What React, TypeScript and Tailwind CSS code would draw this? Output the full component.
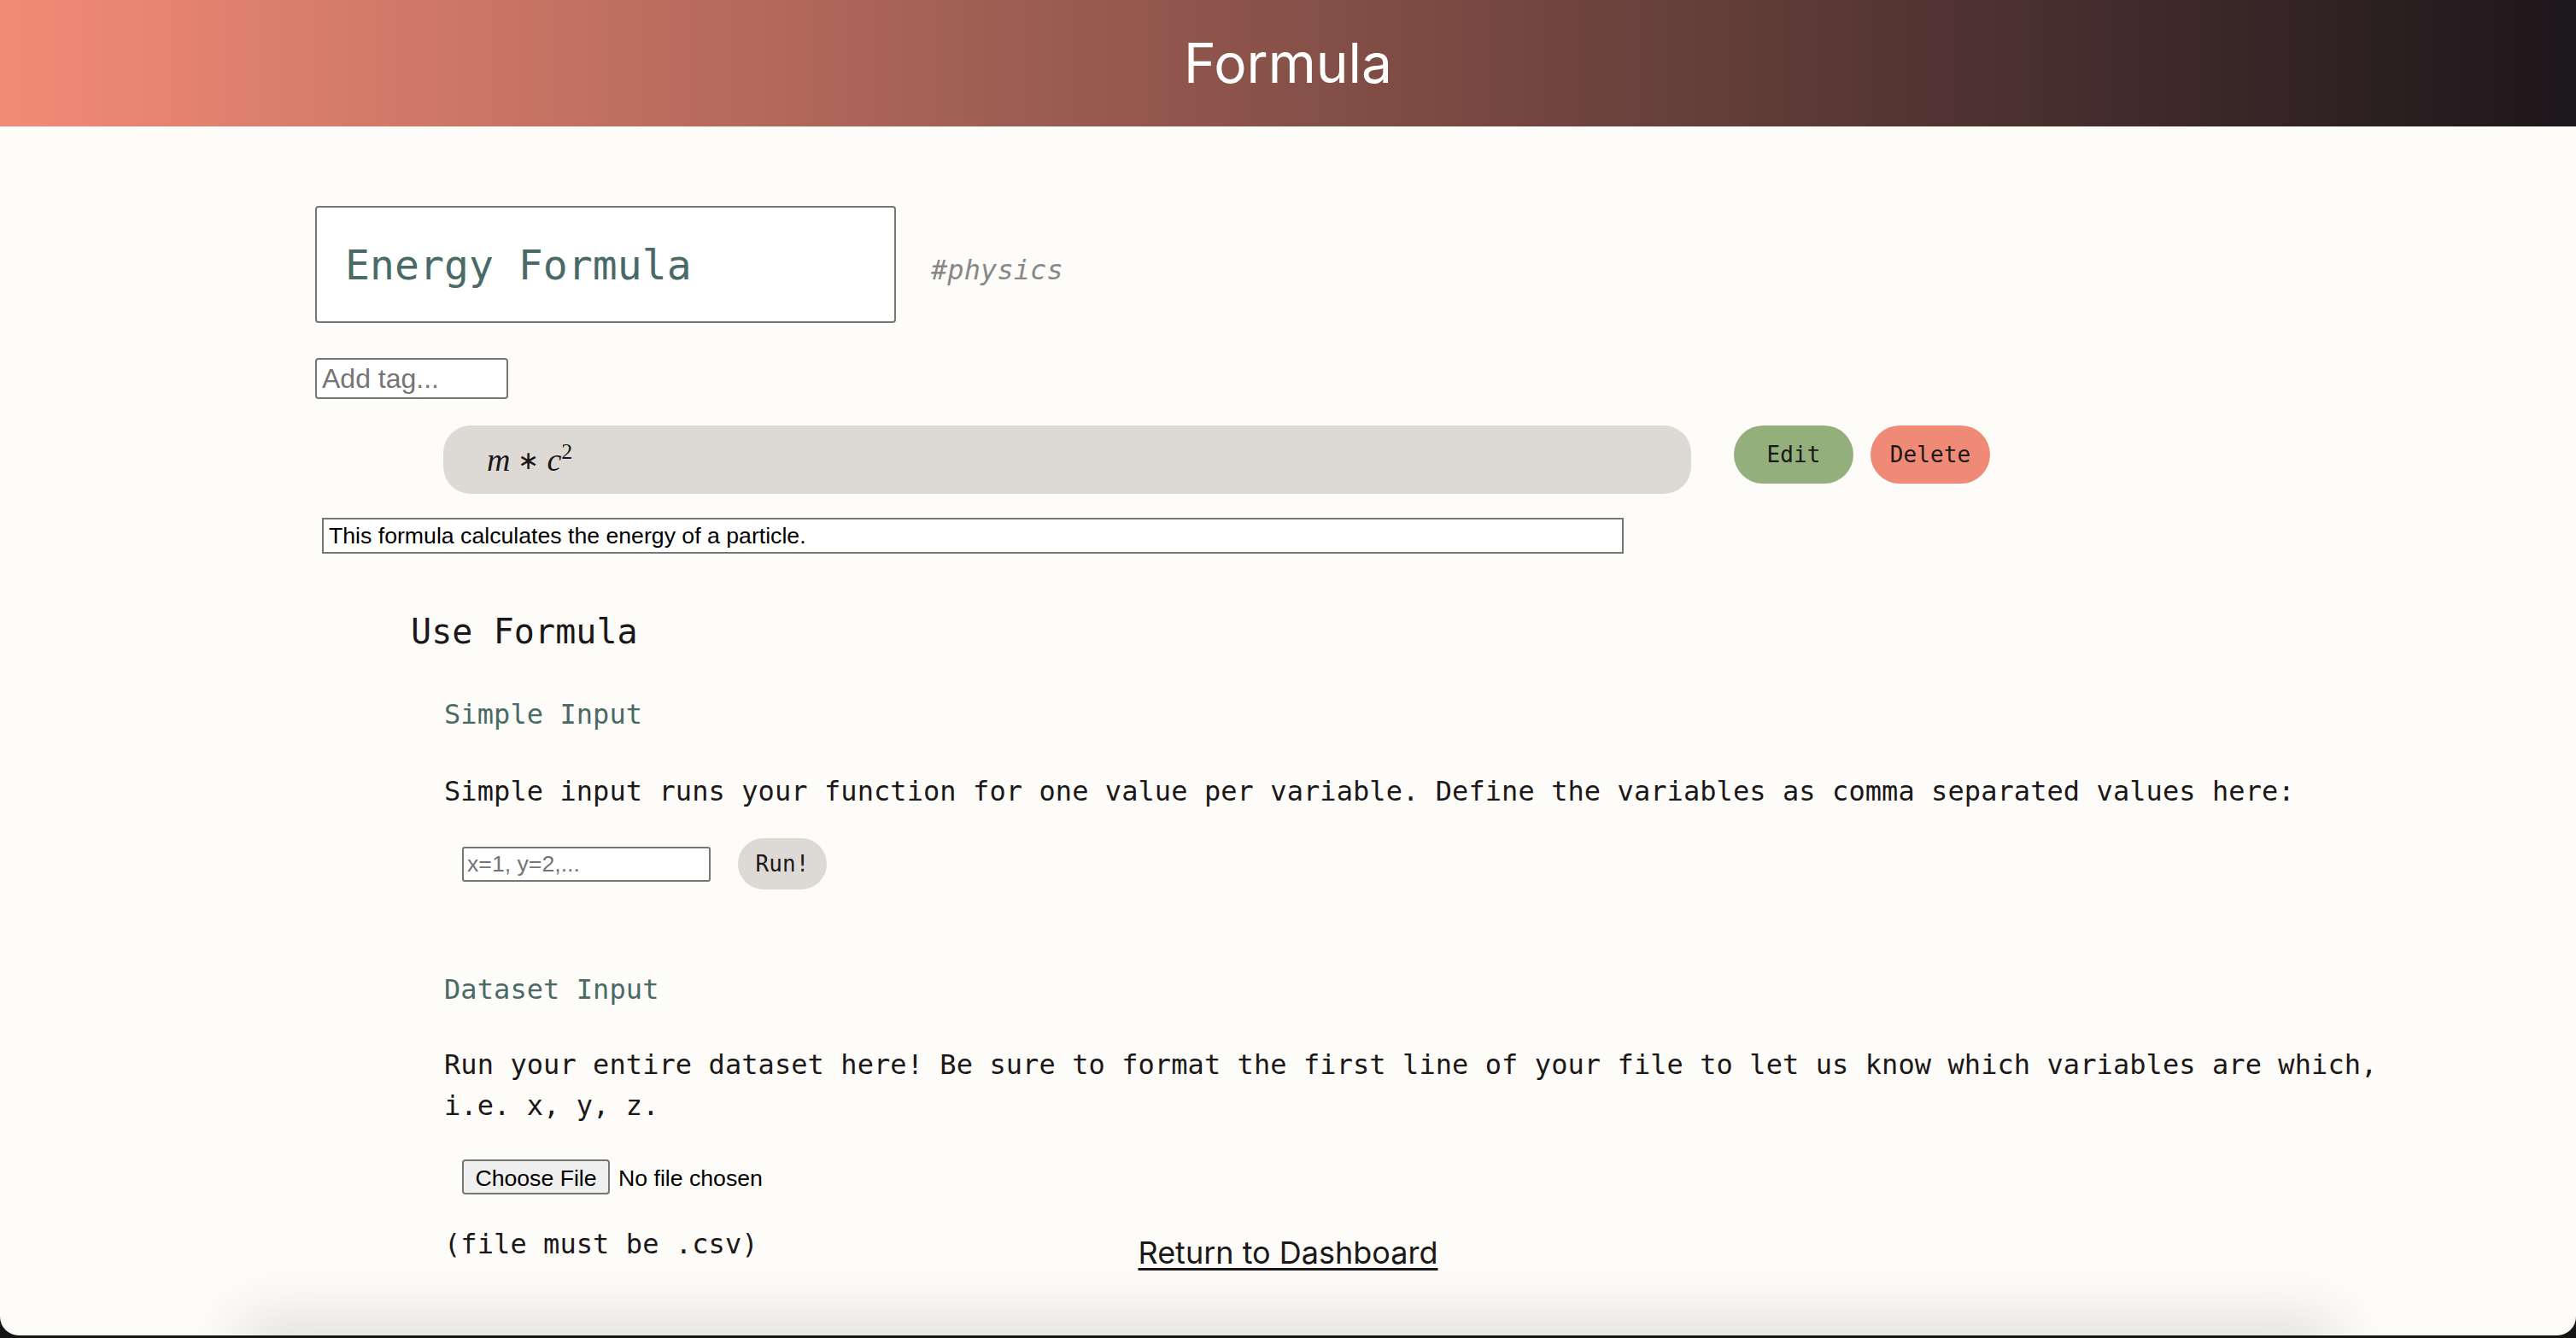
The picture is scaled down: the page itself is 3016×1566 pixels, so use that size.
import React from 'react';

const mono = "font-['DejaVu_Sans_Mono',monospace] tracking-[0.005em]";

export default function App() {
  return (
    <div className="h-[1566px] overflow-hidden bg-[#151515]">
      <div
        className={`flex h-[1563px] flex-col overflow-hidden rounded-b-[22px] bg-[#fdfcf8] text-[#1c1719] ${mono}`}
      >
        <header className="flex h-[148px] shrink-0 items-center justify-center bg-linear-to-r/srgb from-[#f28b76] to-[#1c171b]">
          <h1 className="font-['Inter',sans-serif] text-[64px] leading-none font-normal tracking-normal text-white">
            Formula
          </h1>
        </header>

        <div className="pl-[369px]">
          <div className="mt-[93px] flex items-baseline">
            <div className="flex h-[137px] w-[680px] items-center rounded-[4px] border-2 border-[#767676] bg-white pl-[33px] text-[48px] leading-none text-[#4a6a67]">
              Energy Formula
            </div>
            <span className="ml-[41px] text-[32px] text-[#888] italic">
              #physics
            </span>
          </div>

          <input
            className="mt-[41px] block h-[48px] w-[226px] rounded-[4px] border-2 border-[#767676] bg-white px-[6px] font-['Liberation_Sans',Arial,sans-serif] text-[32px] tracking-normal text-black placeholder:text-[#757575]"
            placeholder="Add tag..."
          />

          <div className="mt-[31px] flex items-start">
            <div className="ml-[150px] flex h-[80px] w-[1461px] items-center rounded-[32px] bg-[#dddad6] pl-[51px] font-['Liberation_Serif',serif] text-[38px] tracking-normal">
              <span className="italic">m</span>
              <span className="mx-[9px] text-[30px]">∗</span>
              <span className="italic">c</span>
              <sup className="relative -top-[9px] text-[26px] not-italic">2</sup>
            </div>
            <button className="ml-[50px] h-[68px] w-[140px] rounded-full bg-[#93af7b] text-[26px] text-[#1c1719]">
              Edit
            </button>
            <button className="ml-[20px] h-[68px] w-[140px] rounded-full bg-[#ef8a76] text-[26px] text-[#1c1719]">
              Delete
            </button>
          </div>

          <input
            className="mt-[28px] ml-[8px] block h-[42px] w-[1524px] border-2 border-[#767676] bg-white px-[6px] font-['Liberation_Sans',Arial,sans-serif] text-[26.67px] tracking-normal text-black"
            defaultValue="This formula calculates the energy of a particle."
          />
        </div>

        <section className="pl-[481px]">
          <h2 className="mt-[67px] text-[40px] leading-[48px]">Use Formula</h2>

          <div className="w-[2339px] pl-[39px]">
            <h3 className="mt-[53px] text-[32px] leading-[40px] text-[#4a6a67]">
              Simple Input
            </h3>
            <p className="mt-[46px] text-[32px] leading-[48px]">
              Simple input runs your function for one value per variable.
              Define the variables as comma separated values here:
            </p>
            <div className="mt-[31px] flex items-center pl-[21px]">
              <input
                className="h-[41px] w-[291px] rounded-[3px] border-2 border-[#767676] bg-white px-[4px] font-['Liberation_Sans',Arial,sans-serif] text-[26.67px] tracking-normal text-black placeholder:text-[#757575]"
                placeholder="x=1, y=2,..."
              />
              <button className="ml-[32px] h-[60px] w-[104px] rounded-full bg-[#dddad6] text-[26px]">
                Run!
              </button>
            </div>

            <h3 className="mt-[97px] text-[32px] leading-[40px] text-[#4a6a67]">
              Dataset Input
            </h3>
            <p className="mt-[44px] text-[32px] leading-[48px]">
              Run your entire dataset here! Be sure to format the first line of
              your file to let us know which variables are which, i.e. x, y, z.
            </p>
            <div className="mt-[39px] pl-[21px]">
              <input
                type="file"
                className="font-['Liberation_Sans',Arial,sans-serif] text-[26.67px] tracking-normal text-black file:mr-[10px] file:h-[41px] file:w-[173px] file:rounded-[4px] file:border-2 file:border-solid file:border-[#767676] file:bg-[#efefef] file:text-black"
              />
            </div>
          </div>
        </section>

        <div className="grid grid-cols-[1fr_auto_1fr] items-start">
          <p className="mt-[33px] pl-[520px] text-[32px] leading-[48px]">
            (file must be .csv)
          </p>
          <a
            href="#"
            className="mt-[43px] font-['Inter',sans-serif] text-[36px] leading-[48px] tracking-normal text-[#1c1719] underline decoration-[3px] underline-offset-[5px]"
          >
            Return to Dashboard
          </a>
          <div />
        </div>

        <div className="mt-auto mx-[300px] -mb-[40px] h-[40px] shrink-0 bg-[#e0dfdb] shadow-[0_0_70px_20px_rgba(0,0,0,0.12)]" />
      </div>
    </div>
  );
}
